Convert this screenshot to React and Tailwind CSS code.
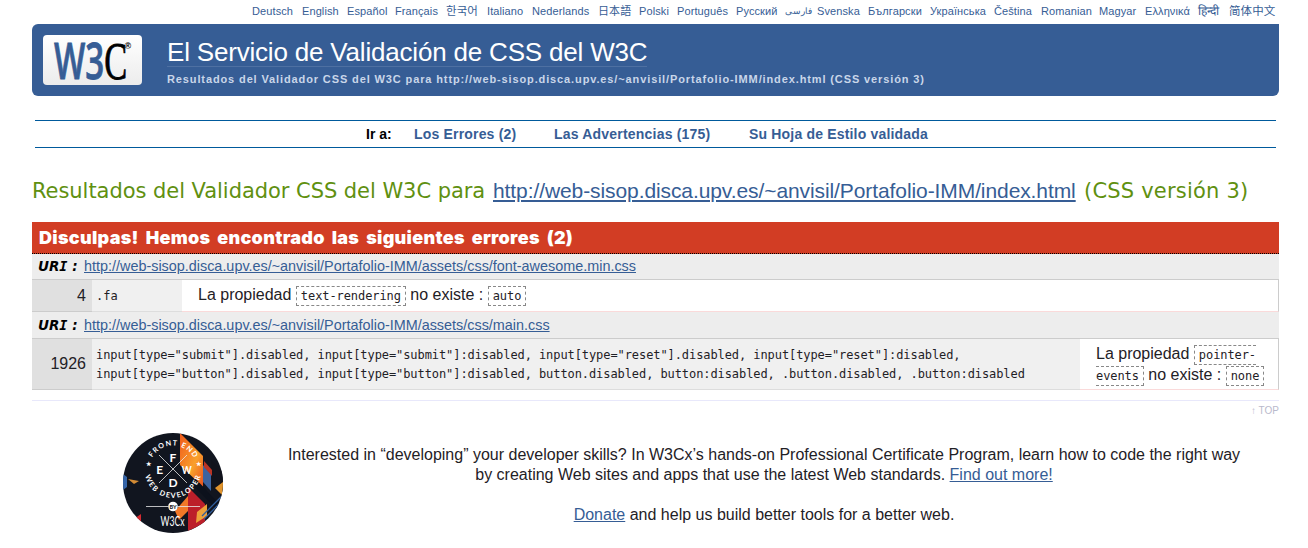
import React from "react";

const languages = [
  ["Deutsch", "w-[50px]"],
  ["English", "w-[45px]"],
  ["Español", "w-[48px]"],
  ["Français", "w-[51px]"],
  ["한국어", "w-[41px] text-[11.5px]"],
  ["Italiano", "w-[45px]"],
  ["Nederlands", "w-[66px]"],
  ["日本語", "w-[41px]"],
  ["Polski", "w-[38px]"],
  ["Português", "w-[59px]"],
  ["Русский", "w-[49px]"],
  ["فارسی", "w-[32px] text-[9px]"],
  ["Svenska", "w-[51px]"],
  ["Български", "w-[62px]"],
  ["Українська", "w-[64px]"],
  ["Čeština", "w-[47px]"],
  ["Romanian", "w-[58px]"],
  ["Magyar", "w-[46px]"],
  ["Ελληνικά", "w-[53px]"],
  ["हिन्दी", "w-[31px] text-[12px]"],
  ["简体中文", "w-[46px] text-[11.5px]"],
];

function Languages() {
  return (
    <ul className="flex h-6 pl-[252px] pt-[3px] text-[11px] leading-4 tracking-[0.1px] text-[#365d95]">
      {languages.map(([name, width]) => (
        <li key={name} className={`shrink-0 whitespace-nowrap leading-4 ${width}`}>{name}</li>
      ))}
    </ul>
  );
}

function Logo() {
  return (
    <div className="h-[50px] w-[99px] shrink-0 rounded-[4px] bg-linear-to-b from-white to-[#ececec]">
      <svg width="99" height="50" viewBox="0 0 99 50" className="overflow-visible">
        <text x="0" y="0" fontSize="51" fontFamily="'Open Sans', sans-serif" fontWeight="600" fill="#365d95" stroke="#365d95" strokeWidth="0.8" transform="translate(11 43.5) scale(0.65 1)">
          W3<tspan fontFamily="'Liberation Serif', serif" fontWeight="400" fontSize="53" fill="#000" stroke="#000">C</tspan>
        </text>
        <text x="81.5" y="14" fontSize="9" fontWeight="700" fill="#000" fontFamily="'Liberation Sans', sans-serif">®</text>
      </svg>
    </div>
  );
}

function Code({ children }) {
  return (
    <code className="border border-dashed border-[#888] px-1 py-[2px] font-['DejaVu_Sans_Mono',monospace] text-[12px] tracking-[-0.08px]">
      {children}
    </code>
  );
}

function UriRow({ href, tall }) {
  return (
    <div className={`flex items-center border-b border-[#ccc] bg-[#ededed] pl-[6px] ${tall ? "h-[27px] pt-px" : "h-[26px]"}`}>
      <span className="w-[46px] whitespace-nowrap font-['DejaVu_Sans',sans-serif] text-[13.5px] font-bold italic text-black">
        UR<span className="font-['DejaVu_Sans_Mono',monospace]">I</span> :
      </span>
      <a className="text-[14.4px] text-[#365d95] underline">{href}</a>
    </div>
  );
}

function Badge() {
  return (
    <svg width="100" height="100" viewBox="0 0 100 100" className="mt-px shrink-0">
      <defs>
        <clipPath id="disc"><circle cx="50" cy="50" r="50" /></clipPath>
        <linearGradient id="flame" x1="0" y1="0" x2="1" y2="1">
          <stop offset="0" stopColor="#ef5a1c" /><stop offset="0.6" stopColor="#f9a02c" /><stop offset="1" stopColor="#e8501e" />
        </linearGradient>
        <path id="arcTop" d="M26 36.5 A24 24 0 0 1 74 36.5" />
        <path id="arcBottom" d="M22 31 A28.5 28.5 0 1 0 78 31" />
      </defs>
      <g clipPath="url(#disc)">
        <rect width="100" height="100" fill="#11151f" />
        <path d="M57 0L80 23V54L57 32Z" fill="url(#flame)" />
        <path d="M80 32L88 41V58L80 49Z" fill="#3c639f" />
        <path d="M88 27L101 40V66L88 53Z" fill="#11131c" />
        <path d="M81 28L89 37V43L81 34Z" fill="#ba3425" />
        <path d="M65 54L82 71V90L65 98Z" fill="#bc1f2a" />
        <path d="M52 78L65 63V78L56 87Z" fill="#f17828" />
        <path d="M72 45L97 72V80L72 54Z" fill="#0c111c" />
        <path d="M74 79L84 71V83L73 90Z" fill="#eda13a" />
        <path d="M79 83L99 63M81 86L101 66M83 89L103 69" stroke="#315f9e" strokeWidth="1.3" />
        <path d="M5 46L16 48L11 51Z" fill="#d28b35" />
        <path d="M0 41L4 44V54L0 57Z" fill="#3565a9" />
        <path d="M8 88L18 81V95Z" fill="#d62b32" />
        <path d="M92 55L100 49V63Z" fill="#e2952d" />
      </g>
      <path d="M36 22L64 50M36 50L64 22M23 73.5H45M55 73.5H77" stroke="#e9e9e9" strokeWidth="0.8" />
      <g fill="#fff" fontFamily="Lato, sans-serif" fontWeight="700" textAnchor="middle">
        <text x="50" y="28.5" fontSize="12">F</text>
        <text x="36.8" y="41" fontSize="12">E</text>
        <text x="63.8" y="41" fontSize="12" textLength="10" lengthAdjust="spacingAndGlyphs">W</text>
        <text x="50" y="53.5" fontSize="12">D</text>
        <text fontSize="7.2" letterSpacing="1.2"><textPath href="#arcTop" startOffset="51%">FRONT END</textPath></text>
        <text fontSize="7.2" letterSpacing="1.35"><textPath href="#arcBottom" startOffset="50.5%">WEB DEVELOPER</textPath></text>
        <text x="25" y="33" fontSize="5.5">★</text>
        <text x="75" y="33" fontSize="5.5">★</text>
        <text x="49.5" y="92.5" fontSize="13.5" fontWeight="400" textLength="24" lengthAdjust="spacingAndGlyphs">W3Cx</text>
      </g>
      <circle cx="50" cy="73.5" r="4.8" fill="#fff" />
      <text x="50" y="75.5" fontSize="5.5" fontWeight="900" textAnchor="middle" fill="#222" fontFamily="Lato, sans-serif">BY</text>
    </svg>
  );
}

export default function App() {
  return (
    <div className="h-[548px] w-[1308px] overflow-hidden bg-white font-['Liberation_Sans','Noto_Sans_CJK_SC',sans-serif] text-[#1f2126]">
      <Languages />
      <div className="pl-8 pr-[29px]">
        <header className="flex h-[72px] rounded-[6px] rounded-tr-none bg-[#365d95] pl-[11px] pt-[11px]">
          <Logo />
          <div className="ml-[25px]">
            <h1 className="h-[32px] w-[480px] whitespace-nowrap border-b border-[#4e70a2] text-[26px] leading-[34px] tracking-[-0.19px] text-white">El Servicio de Validación de CSS del W3C</h1>
            <p className="mt-[4px] whitespace-nowrap text-[11px] font-bold leading-4 tracking-[0.88px] text-[#c9d6e9]">
              Resultados del Validador CSS del W3C para http://web-sisop.disca.upv.es/~anvisil/Portafolio-IMM/index.html (CSS versión 3)
            </p>
          </div>
        </header>

        <nav className="mx-[3px] mt-6 flex h-7 items-center border-y border-[#005a9c] pl-[331px] text-[14px] font-bold text-[#365d95]">
          <span className="w-[48px] text-black">Ir a:</span>
          <a className="w-[140px] tracking-[0.18px]">Los Errores (2)</a>
          <a className="w-[195px] tracking-[0.2px]">Las Advertencias (175)</a>
          <a className="tracking-[0.18px]">Su Hoja de Estilo validada</a>
        </nav>

        <h2 className="mt-[27px] flex h-8 items-baseline whitespace-nowrap font-['DejaVu_Sans',sans-serif] text-[21px] leading-8 text-[#609010]">
          <span className="w-[461px] tracking-[-0.05px]">Resultados del Validador CSS del W3C para</span>
          <span className="w-[591px]"><a className="font-['Liberation_Sans',sans-serif] tracking-[-0.09px] text-[#365d95] underline">http://web-sisop.disca.upv.es/~anvisil/Portafolio-IMM/index.html</a></span>
          <span className="tracking-[0.2px]">(CSS versión 3)</span>
        </h2>

        <section className="mt-[15px]">
          <h3 className="h-8 whitespace-nowrap border-b border-dotted border-black bg-[#d23d24] pl-[7px] font-['Inter',sans-serif] text-[18px] font-black leading-[31px] tracking-[0.3px] [word-spacing:3px] text-white">
            Disculpas! Hemos encontrado las siguientes errores (2)
          </h3>
          <UriRow href="http://web-sisop.disca.upv.es/~anvisil/Portafolio-IMM/assets/css/font-awesome.min.css" />
          <div className="flex h-8">
            <div className="w-[60px] border-b border-[#ccc] bg-[#e0e0e0] pr-[6px] text-right text-[16px] leading-[31px]">4</div>
            <div className="w-[90px] border-b border-[#ddd] bg-[#f0f0f0] pl-1 font-['DejaVu_Sans_Mono',monospace] text-[12px] leading-[33px]">.fa</div>
            <div className="flex-1 border-b border-r border-b-[#fadada] border-r-[#ccc] pl-4 text-[16px] leading-[30px]">
              La propiedad <Code>text-rendering</Code> no existe : <Code>auto</Code>
            </div>
          </div>
          <UriRow tall href="http://web-sisop.disca.upv.es/~anvisil/Portafolio-IMM/assets/css/main.css" />
          <div className="flex h-[51px]">
            <div className="w-[60px] border-b border-[#ccc] bg-[#e0e0e0] pr-[6px] text-right text-[16px] leading-[50px]">1926</div>
            <div className="w-[988px] whitespace-nowrap border-b border-[#ddd] bg-[#f0f0f0] pl-1 pt-[7px] font-['DejaVu_Sans_Mono',monospace] text-[12px] leading-[19px] tracking-[-0.08px]">
              <p>input[type="submit"].disabled, input[type="submit"]:disabled, input[type="reset"].disabled, input[type="reset"]:disabled,</p>
              <p>input[type="button"].disabled, input[type="button"]:disabled, button.disabled, button:disabled, .button.disabled, .button:disabled</p>
            </div>
            <div className="flex-1 whitespace-nowrap border-b border-r border-b-[#fadada] border-r-[#ccc] pl-4 pt-[5px] text-[16px] leading-5">
              La propiedad <Code>pointer-<br />events</Code> no existe : <Code>none</Code>
            </div>
          </div>
        </section>

        <div className="mt-[10px] h-8 border-t border-[#e8e8fb] pt-[2px] text-right text-[10px] leading-4 text-[#b9b9cc]">↑ TOP</div>

        <footer className="flex pl-[91px]">
          <Badge />
          <div className="ml-[31px] mt-[13px] w-[1020px] text-center text-[16px] leading-5">
            <p>Interested in “developing” your developer skills? In W3Cx’s hands-on Professional Certificate Program, learn how to code the right way<br />by creating Web sites and apps that use the latest Web standards. <a className="text-[#365d95] underline">Find out more!</a></p>
            <p className="mt-5"><a className="text-[#365d95] underline">Donate</a> and help us build better tools for a better web.</p>
          </div>
        </footer>
      </div>
    </div>
  );
}
